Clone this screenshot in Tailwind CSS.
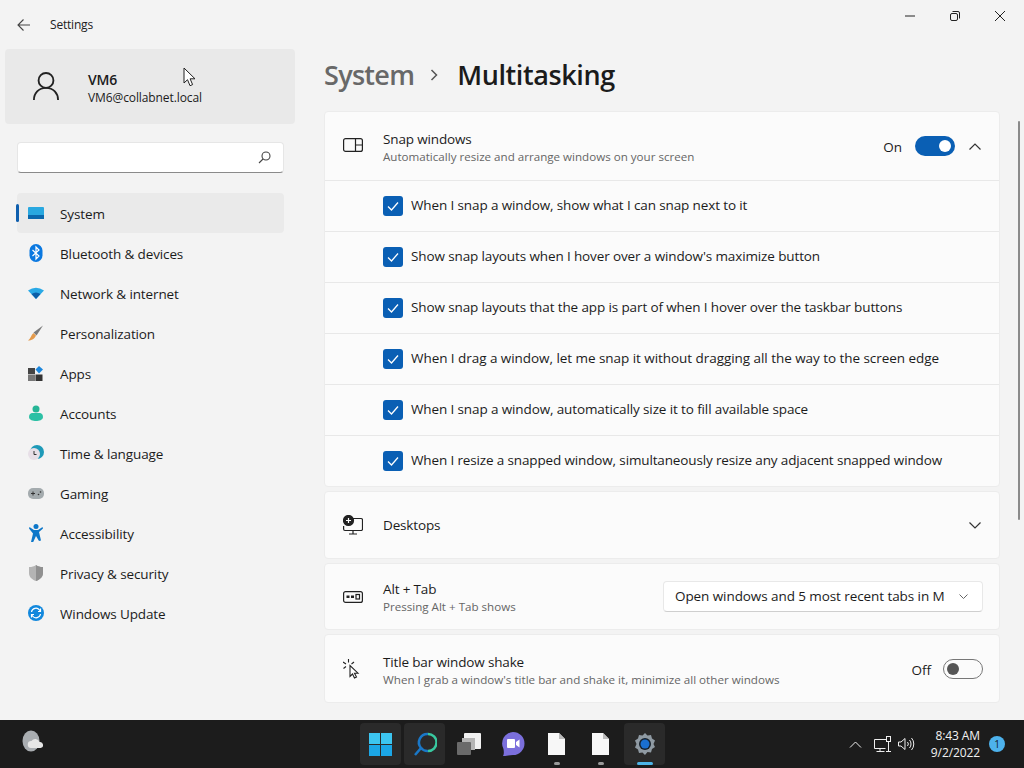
<!DOCTYPE html>
<html>
<head>
<meta charset="utf-8">
<script src="https://cdn.jsdelivr.net/npm/@tailwindcss/browser@4"></script>
</head>
<body class="m-0 overflow-hidden">
<div class="w-[1024px] h-[768px] flex flex-col overflow-hidden bg-[#f3f3f3] text-[#1b1b1b] font-['Open_Sans','Noto_Sans',sans-serif] text-[13.5px] relative">
  <div class="h-[720px] flex">
    <!-- Sidebar -->
    <aside class="w-[324px] shrink-0 flex flex-col">
      <div class="h-[49px] flex items-center">
        <svg class="ml-[17px] w-[14px] h-[14px]" viewBox="0 0 14 14" fill="none" stroke="#444" stroke-width="1.1"><path d="M13 7H1M6.500 1.500 1 7l5.500 5.500"/></svg>
        <span class="ml-[19px] text-[12px] tracking-[-0.2px] text-[#222]">Settings</span>
      </div>
      <div class="ml-[5px] w-[290px] h-[75px] bg-[#e9e9e9] rounded-[4px] flex items-center relative">
        <svg class="ml-[28px] mb-[2px] w-[26px] h-[30px]" viewBox="0 0 28 32" fill="none" stroke="#222" stroke-width="2"><circle cx="14" cy="10" r="8"/><path d="M1 31c0-7 5-13 13-13s13 6 13 13"/></svg>
        <div class="ml-[29px] mt-[4px] flex flex-col">
          <span class="text-[14px] leading-[18px] font-semibold tracking-[-0.2px]">VM6</span>
          <span class="text-[12px] leading-[17px] tracking-[-0.1px]">VM6@collabnet.local</span>
        </div>
        <svg class="absolute left-[178px] top-[18px] w-[13px] h-[20px]" viewBox="0 0 13 20" fill="#fff" stroke="#222" stroke-width="1"><path d="M1 1v15l3.500-3.300 2.500 6 2.600-1.100-2.500-5.800H12z"/></svg>
      </div>
      <div class="mt-[18px] ml-[17px] w-[267px] h-[31px] bg-white rounded-[4px] border border-[#e6e6e6] border-b-[#8a8a8a] flex items-center justify-end pr-[12px]">
        <svg class="w-[13px] h-[13px]" viewBox="0 0 13 13" fill="none" stroke="#444" stroke-width="1.100"><circle cx="8" cy="5" r="4"/><path d="M5 8 1 12"/></svg>
      </div>
      <nav class="mt-[20px] ml-[17px] w-[267px] flex flex-col text-[13.5px] tracking-[-0.12px] [&>div>span:last-child]:mt-[2px]">
        <div class="h-[40px] flex items-center bg-[#eaeaea] rounded-[4px] relative">
          <span class="absolute left-[-1px] top-[11px] w-[3px] h-[18px] rounded bg-[#0f5fae]"></span>
          <svg class="ml-[11px] w-[16px] h-[12px]" viewBox="0 0 16 12"><rect width="16" height="12" rx="1" fill="#29a8e0"/><rect y="8" width="16" height="4" fill="#0b68ad"/></svg>
          <span class="ml-[16px]">System</span>
        </div>
        <div class="h-[40px] flex items-center">
          <svg class="ml-[11px] w-[16px] h-[18px]" viewBox="0 0 16 18"><rect width="13" height="18" x="1.500" rx="6.500" fill="#0a78e0"/><path d="M4.500 6 11 12l-3 3V3l3 3-6.500 6" fill="none" stroke="#fff" stroke-width="1.200"/></svg>
          <span class="ml-[16px]">Bluetooth &amp; devices</span>
        </div>
        <div class="h-[40px] flex items-center">
          <svg class="ml-[11px] w-[16px] h-[12px]" viewBox="0 0 16 12"><path d="M0 3.500Q8-2 16 3.500L8 12z" fill="#29a9e6"/><path d="M3.500 7Q8 4 12.500 7L8 12z" fill="#0b5ea8"/></svg>
          <span class="ml-[16px]">Network &amp; internet</span>
        </div>
        <div class="h-[40px] flex items-center">
          <svg class="ml-[11px] w-[16px] h-[16px]" viewBox="0 0 16 16"><path d="M15 .500 5.500 7.500 8.500 10.500z" fill="#7b7b7b"/><path d="M5.500 8 8 10.500C7 13.500 3.500 15.500 0 15.500 2.500 14 3 10 5.500 8z" fill="#e39a4c"/></svg>
          <span class="ml-[16px]">Personalization</span>
        </div>
        <div class="h-[40px] flex items-center">
          <svg class="ml-[11px] w-[16px] h-[15px]" viewBox="0 0 16 15"><rect y="2" width="7" height="6" fill="#444"/><rect y="8.500" width="7" height="6.500" fill="#777"/><rect x="7.500" y="8.500" width="7" height="6.500" fill="#333"/><path d="M11 0l4 3.500L11 7.500 7.500 3.500z" fill="#1c86dc"/></svg>
          <span class="ml-[16px]">Apps</span>
        </div>
        <div class="h-[40px] flex items-center">
          <svg class="ml-[11px] w-[16px] h-[16px]" viewBox="0 0 16 16"><circle cx="8" cy="4" r="3.500" fill="#26b596"/><path d="M1 12c0-3 2-4 3-4h8c1 0 3 1 3 4 0 3-4 4-7 4s-7-1-7-4z" fill="#2cc0a5"/></svg>
          <span class="ml-[16px]">Accounts</span>
        </div>
        <div class="h-[40px] flex items-center">
          <svg class="ml-[11px] w-[16px] h-[16px]" viewBox="0 0 16 16"><circle cx="9" cy="7" r="7" fill="#1e9ab8"/><circle cx="6" cy="9" r="6" fill="#e7dfe7"/><path d="M6 6v3.500h2.500" fill="none" stroke="#333" stroke-width="1"/></svg>
          <span class="ml-[16px]">Time &amp; language</span>
        </div>
        <div class="h-[40px] flex items-center">
          <svg class="ml-[11px] w-[16px] h-[11px]" viewBox="0 0 16 11"><rect width="16" height="11" rx="5" fill="#a4abae"/><path d="M3 5.500h4M5 3.500v4" stroke="#333" stroke-width="1"/><circle cx="10.500" cy="6.500" r=".8" fill="#333"/><circle cx="12.500" cy="4" r=".8" fill="#333"/></svg>
          <span class="ml-[16px]">Gaming</span>
        </div>
        <div class="h-[40px] flex items-center">
          <svg class="ml-[12px] w-[14px] h-[18px]" viewBox="0 0 14 18" fill="#0d77c9"><circle cx="7" cy="2.500" r="2.500"/><path d="M.500 3 5 6h4l4.500-3 .5 1.500-4 3.500 2 8.500-2 .5L7 12l-3 6.500-2-.5 2-8.500L0 4.500z"/></svg>
          <span class="ml-[17px]">Accessibility</span>
        </div>
        <div class="h-[40px] flex items-center">
          <svg class="ml-[12px] w-[14px] h-[16px]" viewBox="0 0 14 16"><path d="M7 0c2 1.500 4 2 7 2v6c0 4-3 6.500-7 8-4-1.500-7-4-7-8V2c3 0 5-.5 7-2z" fill="#b4b4b4"/><path d="M7 0c2 1.500 4 2 7 2v6c0 4-3 6.500-7 8z" fill="#909090"/></svg>
          <span class="ml-[17px]">Privacy &amp; security</span>
        </div>
        <div class="h-[40px] flex items-center">
          <svg class="ml-[11px] w-[16px] h-[16px]" viewBox="0 0 16 16"><circle cx="8" cy="8" r="8" fill="#1288dd"/><path d="M3.500 7A4.500 4.500 0 0 1 11.500 5l1 1M12.500 9A4.500 4.500 0 0 1 4.500 11l-1-1M12.500 3.500V6.500H10M3.500 12.500V9.500H6" fill="none" stroke="#fff" stroke-width="1.200"/></svg>
          <span class="ml-[16px]">Windows Update</span>
        </div>
      </nav>
    </aside>
    <!-- Main -->
    <main class="flex-1 flex flex-col relative">
      <div class="h-[32px] flex justify-end">
        <div class="w-[48px] flex items-center justify-center"><svg class="w-[10px] h-[10px]" viewBox="0 0 10 10" stroke="#222" stroke-width="1"><path d="M0 5h10"/></svg></div>
        <div class="w-[42px] flex items-center justify-center"><svg class="w-[10px] h-[10px]" viewBox="0 0 10 10" fill="none" stroke="#222" stroke-width="1"><rect x=".500" y="2.500" width="7" height="7" rx="1.500"/><path d="M2.500.500H8A1.500 1.500 0 0 1 9.500 2v5.500"/></svg></div>
        <div class="w-[48px] flex items-center justify-center"><svg class="w-[10px] h-[10px]" viewBox="0 0 10 10" stroke="#222" stroke-width="1"><path d="M0 0l10 10M10 0 0 10"/></svg></div>
      </div>
      <div class="h-[79px] pt-[7px] flex items-center text-[27px] font-semibold tracking-[-0.4px]">
        <span class="text-[#686868] tracking-[-0.7px]">System</span>
        <svg class="ml-[16px] mr-[18px] w-[9px] h-[14px]" viewBox="0 0 9 14" fill="none" stroke="#555" stroke-width="1.500"><path d="M1.500 2 6.500 7l-5 5"/></svg>
        <span>Multitasking</span>
      </div>
      <div class="w-[676px] flex flex-col gap-[4px]">
        <!-- Snap -->
        <section class="bg-[#fbfbfb] rounded-[4px] border border-[#ececec] h-[376px] flex flex-col">
          <div class="h-[68px] flex items-center pl-[18px] pr-[18px]">
            <svg class="mb-[2px] w-[20px] h-[14px]" viewBox="0 0 20 14" fill="none" stroke="#222" stroke-width="1.200"><rect x=".600" y=".600" width="18.800" height="12.800" rx="2"/><path d="M12.500.600v12.800M12.500 7h7"/></svg>
            <div class="ml-[20px] mt-[2px] flex flex-col">
              <span class="text-[13.500px] leading-[18px] tracking-[-0.15px]">Snap windows</span>
              <span class="mt-[1px] text-[11.600px] leading-[16px] text-[#666]">Automatically resize and arrange windows on your screen</span>
            </div>
            <span class="ml-auto mt-[2px] text-[13.500px]">On</span>
            <div class="ml-[13px] w-[40px] h-[20px] rounded-full bg-[#0a5fb4] flex items-center justify-end pr-[4px]"><span class="w-[12px] h-[12px] rounded-full bg-white"></span></div>
            <svg class="ml-[14px] w-[12px] h-[7px]" viewBox="0 0 12 7" fill="none" stroke="#333" stroke-width="1.200"><path d="M.500 6.500 6 1l5.500 5.500"/></svg>
          </div>
          <div class="h-[51px] border-t border-[#e8e8e8] flex items-center pl-[58px]"><span class="w-[20px] h-[20px] rounded-[3px] bg-[#0a5fb4] flex items-center justify-center"><svg class="w-[12px] h-[10px]" viewBox="0 0 12 10" fill="none" stroke="#fff" stroke-width="1.300"><path d="M1 5.500 4.500 9 11 1.500"/></svg></span><span class="ml-[8px] mb-[1px] tracking-[-0.12px]">When I snap a window, show what I can snap next to it</span></div>
          <div class="h-[51px] border-t border-[#e8e8e8] flex items-center pl-[58px]"><span class="w-[20px] h-[20px] rounded-[3px] bg-[#0a5fb4] flex items-center justify-center"><svg class="w-[12px] h-[10px]" viewBox="0 0 12 10" fill="none" stroke="#fff" stroke-width="1.300"><path d="M1 5.500 4.500 9 11 1.500"/></svg></span><span class="ml-[8px] mb-[1px] tracking-[-0.12px]">Show snap layouts when I hover over a window's maximize button</span></div>
          <div class="h-[51px] border-t border-[#e8e8e8] flex items-center pl-[58px]"><span class="w-[20px] h-[20px] rounded-[3px] bg-[#0a5fb4] flex items-center justify-center"><svg class="w-[12px] h-[10px]" viewBox="0 0 12 10" fill="none" stroke="#fff" stroke-width="1.300"><path d="M1 5.500 4.500 9 11 1.500"/></svg></span><span class="ml-[8px] mb-[1px] tracking-[-0.12px]">Show snap layouts that the app is part of when I hover over the taskbar buttons</span></div>
          <div class="h-[51px] border-t border-[#e8e8e8] flex items-center pl-[58px]"><span class="w-[20px] h-[20px] rounded-[3px] bg-[#0a5fb4] flex items-center justify-center"><svg class="w-[12px] h-[10px]" viewBox="0 0 12 10" fill="none" stroke="#fff" stroke-width="1.300"><path d="M1 5.500 4.500 9 11 1.500"/></svg></span><span class="ml-[8px] mb-[1px] tracking-[-0.05px]">When I drag a window, let me snap it without dragging all the way to the screen edge</span></div>
          <div class="h-[51px] border-t border-[#e8e8e8] flex items-center pl-[58px]"><span class="w-[20px] h-[20px] rounded-[3px] bg-[#0a5fb4] flex items-center justify-center"><svg class="w-[12px] h-[10px]" viewBox="0 0 12 10" fill="none" stroke="#fff" stroke-width="1.300"><path d="M1 5.500 4.500 9 11 1.500"/></svg></span><span class="ml-[8px] mb-[1px] tracking-[-0.12px]">When I snap a window, automatically size it to fill available space</span></div>
          <div class="h-[51px] border-t border-[#e8e8e8] flex items-center pl-[58px]"><span class="w-[20px] h-[20px] rounded-[3px] bg-[#0a5fb4] flex items-center justify-center"><svg class="w-[12px] h-[10px]" viewBox="0 0 12 10" fill="none" stroke="#fff" stroke-width="1.300"><path d="M1 5.500 4.500 9 11 1.500"/></svg></span><span class="ml-[8px] mb-[1px] tracking-[-0.14px]">When I resize a snapped window, simultaneously resize any adjacent snapped window</span></div>
        </section>
        <!-- Desktops -->
        <section class="bg-[#fbfbfb] rounded-[4px] border border-[#ececec] h-[68px] flex items-center pl-[18px] pr-[18px]">
          <svg class="w-[20px] h-[20px]" viewBox="0 0 20 20" fill="none" stroke="#222" stroke-width="1.200"><path d="M9 3.500h9a1.500 1.500 0 0 1 1.500 1.500v9a1.500 1.500 0 0 1-1.500 1.500H2A1.500 1.500 0 0 1 .6 14v-3"/><path d="M10 15.500v3M6 19h8"/><circle cx="5.500" cy="5.500" r="5" fill="#222"/><path d="M5.500 3v5M3 5.500h5" stroke="#fff"/></svg>
          <span class="ml-[20px] text-[13.500px] tracking-[-0.15px]">Desktops</span>
          <svg class="ml-auto w-[12px] h-[7px]" viewBox="0 0 12 7" fill="none" stroke="#333" stroke-width="1.200"><path d="M.500.500 6 6l5.500-5.500"/></svg>
        </section>
        <!-- Alt tab -->
        <section class="bg-[#fbfbfb] rounded-[4px] border border-[#ececec] h-[67px] flex items-center pl-[18px] pr-[16px]">
          <svg class="w-[20px] h-[12px]" viewBox="0 0 20 12" fill="none" stroke="#222" stroke-width="1.200"><rect x=".600" y=".600" width="18.800" height="10.800" rx="2"/><rect x="3.500" y="4.500" width="3" height="2.500" fill="#222" stroke="none"/><rect x="8" y="4.500" width="3" height="2.500" fill="#222" stroke="none"/><rect x="13" y="3.500" width="3.500" height="4.500"/></svg>
          <div class="ml-[20px] mt-[1px] flex flex-col">
            <span class="text-[13.500px] leading-[18px] tracking-[-0.15px]">Alt + Tab</span>
            <span class="mt-[1px] text-[11.600px] leading-[16px] text-[#666]">Pressing Alt + Tab shows</span>
          </div>
          <div class="ml-auto w-[320px] h-[31px] bg-white rounded-[4px] border border-[#e8e8e8] border-b-[#cfcfcf] flex items-center pl-[11px] pr-[14px]">
            <span class="tracking-[-0.08px] whitespace-nowrap">Open windows and 5 most recent tabs in M</span>
            <svg class="ml-auto w-[9px] h-[5px]" viewBox="0 0 9 5" fill="none" stroke="#666" stroke-width="1"><path d="M.500.500 4.500 4.500l4-4"/></svg>
          </div>
        </section>
        <!-- Title bar -->
        <section class="bg-[#fbfbfb] rounded-[4px] border border-[#ececec] h-[69px] flex items-center pl-[18px] pr-[16px]">
          <svg class="w-[20px] h-[20px]" viewBox="0 0 20 20" fill="none" stroke="#222" stroke-width="1.100"><path d="M5.500 0v3.500M0 3l3 2M11 3 8.500 5M.500 9.500l2.500-2" /><path d="M7 6.500v11l2.500-2.500 2 4 2-1-2-3.800h3.500z" fill="#fff"/></svg>
          <div class="ml-[20px] mt-[3px] flex flex-col">
            <span class="text-[13.500px] leading-[18px] tracking-[-0.15px]">Title bar window shake</span>
            <span class="mt-[1px] text-[11.650px] leading-[16px] text-[#666]">When I grab a window's title bar and shake it, minimize all other windows</span>
          </div>
          <span class="ml-auto mt-[3px] text-[13.500px]">Off</span>
          <div class="ml-[12px] w-[40px] h-[20px] rounded-full border border-[#777] flex items-center pl-[3px]"><span class="w-[12px] h-[12px] rounded-full bg-[#555]"></span></div>
        </section>
      </div>
      <span class="absolute left-[694px] top-[121px] w-[2px] h-[399px] bg-[#8a8a8a] rounded"></span>
    </main>
  </div>
  <!-- Taskbar -->
  <footer class="h-[48px] bg-[#1c1c1c] flex items-center relative text-white">
    <svg class="ml-[21px] mb-[4px] w-[24px] h-[24px]" viewBox="0 0 24 24"><ellipse cx="10" cy="11" rx="8.500" ry="10.500" fill="#a9adb1"/><path d="M10 18a3.500 3.500 0 0 1 .5-7 4.500 4.500 0 0 1 8 1 3 3 0 0 1 1 6z" fill="#e6e6e6"/></svg>
    <div class="absolute left-[360px] top-[3px] h-[42px] flex items-center gap-[3px]">
      <div class="w-[41px] h-[42px] rounded-[4px] bg-[#2a2a2a] flex items-center justify-center">
        <svg class="w-[23px] h-[23px]" viewBox="0 0 23 23"><rect width="11" height="11" fill="#3cc5f0"/><rect x="12" width="11" height="11" fill="#3cc5f0"/><rect y="12" width="11" height="11" fill="#1ba6e6"/><rect x="12" y="12" width="11" height="11" fill="#1ba6e6"/></svg>
      </div>
      <div class="w-[41px] h-[42px] rounded-[4px] bg-[#2a2a2a] flex items-center justify-center">
        <svg class="w-[24px] h-[24px]" viewBox="0 0 24 24" fill="none" stroke-width="2.500"><path d="M15 2a8.500 8.500 0 0 1 0 17" stroke="#38c9a0"/><path d="M15 2A8.500 8.500 0 0 0 8 16L2 23" stroke="#1a78c8"/><path d="M8 16a8.500 8.500 0 0 0 7 3" stroke="#1a78c8"/></svg>
      </div>
      <div class="w-[41px] h-[42px] flex items-center justify-center">
        <svg class="w-[24px] h-[22px]" viewBox="0 0 24 22"><rect x="7" width="17" height="16" rx="1" fill="#f2f2f2"/><rect x="5" y="5" width="13" height="12" fill="#b5b5b5"/><rect y="9" width="14" height="13" rx="1" fill="#6a6a6a"/></svg>
      </div>
      <div class="w-[41px] h-[42px] flex items-center justify-center">
        <svg class="w-[24px] h-[26px]" viewBox="0 0 24 26"><path d="M12 1a11.500 11.500 0 0 1 0 23C8 24 4 25.500 2 25c1-1 1-4 .5-7A11.500 11.500 0 0 1 12 1z" fill="#7b6fdc"/><rect x="6" y="8" width="8" height="9" rx="1" fill="#fff"/><path d="M15 11l3.500-2.500v8L15 14z" fill="#fff"/></svg>
      </div>
      <div class="w-[41px] h-[42px] flex flex-col items-center justify-center relative">
        <svg class="w-[17px] h-[22px]" viewBox="0 0 17 22"><path d="M0 0h11l6 6v16H0z" fill="#f7f7f7"/><path d="M11 0v6h6z" fill="#bbb"/></svg>
        <span class="absolute bottom-[0px] w-[6px] h-[3px] rounded bg-[#9a9a9a]"></span>
      </div>
      <div class="w-[41px] h-[42px] flex flex-col items-center justify-center relative">
        <svg class="w-[17px] h-[22px]" viewBox="0 0 17 22"><path d="M0 0h11l6 6v16H0z" fill="#f7f7f7"/><path d="M11 0v6h6z" fill="#bbb"/></svg>
        <span class="absolute bottom-[0px] w-[6px] h-[3px] rounded bg-[#9a9a9a]"></span>
      </div>
      <div class="w-[41px] h-[42px] rounded-[4px] bg-[#2a2a2a] flex items-center justify-center relative">
        <svg class="w-[24px] h-[24px]" viewBox="0 0 24 24"><path d="M12 1l2.500 2.500 3.500-.5 1 3.500 3 2-1.500 3.500 1.500 3-3 2-1 3.500-3.500-.5L12 23l-2.500-2.500-3.500.5-1-3.500-3-2L3.500 12 2 8.500l3-2 1-3.500 3.500.5z" fill="#8f9aa3"/><circle cx="12" cy="12" r="6" fill="#15202b"/><circle cx="12" cy="12" r="4.500" fill="#1a6fd0"/></svg>
        <span class="absolute bottom-[0px] w-[16px] h-[3px] rounded bg-[#4db5e8]"></span>
      </div>
    </div>
    <div class="ml-auto flex items-center">
      <svg class="w-[13px] h-[7px]" viewBox="0 0 12 7" fill="none" stroke="#eee" stroke-width="1"><path d="M.500 6.500 6 1l5.500 5.500"/></svg>
      <svg class="ml-[12px] w-[18px] h-[16px]" viewBox="0 0 18 16" fill="none" stroke="#eee" stroke-width="1"><path d="M12 3.500H.5v9h11M6 12.500v3M2.500 15.500h8"/><rect x="12.500" y=".500" width="4" height="5"/><path d="M14.500 5.500v10M12 15.500h5"/></svg>
      <svg class="ml-[6px] w-[17px] h-[14px]" viewBox="0 0 17 14" fill="none" stroke="#eee" stroke-width="1"><path d="M.500 5v4h2.500l4 3.500V1.500L3 5z"/><path d="M9.500 5a3 3 0 0 1 0 4M11.500 3a6 6 0 0 1 0 8M13.500 1a9 9 0 0 1 0 12"/></svg>
      <div class="ml-[3px] w-[62px] flex flex-col items-end text-[12px] leading-[17px] text-[#f2f2f2] tracking-[-0.1px]"><span>8:43 AM</span><span>9/2/2022</span></div>
      <span class="ml-[9px] mr-[19px] w-[16px] h-[16px] rounded-full bg-[#4db2ec] text-[#10202c] text-[10px] leading-[16px] text-center">1</span>
    </div>
  </footer>
</div>
</body>
</html>
